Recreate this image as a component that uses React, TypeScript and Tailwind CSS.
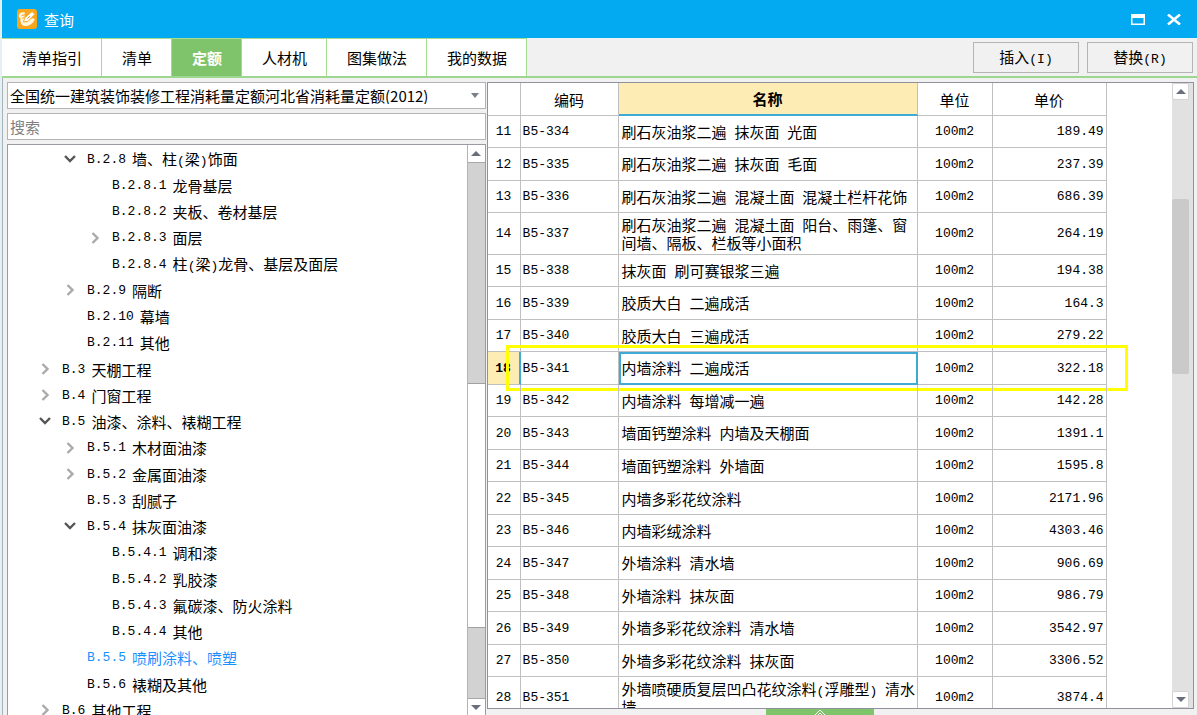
import React, { useState } from "react";
import clsx from "clsx";

const tabs = ["清单指引", "清单", "定额", "人材机", "图集做法", "我的数据"];

type TreeNode = {
	level: number;
	code: string;
	name: string;
	state?: "open" | "closed";
};

const tree: TreeNode[] = [
	{ level: 2, code: "B.2.8", name: "墙、柱(梁)饰面", state: "open" },
	{ level: 3, code: "B.2.8.1", name: "龙骨基层" },
	{ level: 3, code: "B.2.8.2", name: "夹板、卷材基层" },
	{ level: 3, code: "B.2.8.3", name: "面层", state: "closed" },
	{ level: 3, code: "B.2.8.4", name: "柱(梁)龙骨、基层及面层" },
	{ level: 2, code: "B.2.9", name: "隔断", state: "closed" },
	{ level: 2, code: "B.2.10", name: "幕墙" },
	{ level: 2, code: "B.2.11", name: "其他" },
	{ level: 1, code: "B.3", name: "天棚工程", state: "closed" },
	{ level: 1, code: "B.4", name: "门窗工程", state: "closed" },
	{ level: 1, code: "B.5", name: "油漆、涂料、裱糊工程", state: "open" },
	{ level: 2, code: "B.5.1", name: "木材面油漆", state: "closed" },
	{ level: 2, code: "B.5.2", name: "金属面油漆", state: "closed" },
	{ level: 2, code: "B.5.3", name: "刮腻子" },
	{ level: 2, code: "B.5.4", name: "抹灰面油漆", state: "open" },
	{ level: 3, code: "B.5.4.1", name: "调和漆" },
	{ level: 3, code: "B.5.4.2", name: "乳胶漆" },
	{ level: 3, code: "B.5.4.3", name: "氟碳漆、防火涂料" },
	{ level: 3, code: "B.5.4.4", name: "其他" },
	{ level: 2, code: "B.5.5", name: "喷刷涂料、喷塑" },
	{ level: 2, code: "B.5.6", name: "裱糊及其他" },
	{ level: 1, code: "B.6", name: "其他工程", state: "closed" },
];

const rows: [number, string, string, string][] = [
	[11, "B5-334", "刷石灰油浆二遍 抹灰面 光面", "189.49"],
	[12, "B5-335", "刷石灰油浆二遍 抹灰面 毛面", "237.39"],
	[13, "B5-336", "刷石灰油浆二遍 混凝土面 混凝土栏杆花饰", "686.39"],
	[14, "B5-337", "刷石灰油浆二遍 混凝土面 阳台、雨篷、窗间墙、隔板、栏板等小面积", "264.19"],
	[15, "B5-338", "抹灰面 刷可赛银浆三遍", "194.38"],
	[16, "B5-339", "胶质大白 二遍成活", "164.3"],
	[17, "B5-340", "胶质大白 三遍成活", "279.22"],
	[18, "B5-341", "内墙涂料 二遍成活", "322.18"],
	[19, "B5-342", "内墙涂料 每增减一遍", "142.28"],
	[20, "B5-343", "墙面钙塑涂料 内墙及天棚面", "1391.1"],
	[21, "B5-344", "墙面钙塑涂料 外墙面", "1595.8"],
	[22, "B5-345", "内墙多彩花纹涂料", "2171.96"],
	[23, "B5-346", "内墙彩绒涂料", "4303.46"],
	[24, "B5-347", "外墙涂料 清水墙", "906.69"],
	[25, "B5-348", "外墙涂料 抹灰面", "986.79"],
	[26, "B5-349", "外墙多彩花纹涂料 清水墙", "3542.97"],
	[27, "B5-350", "外墙多彩花纹涂料 抹灰面", "3306.52"],
	[28, "B5-351", "外墙喷硬质复层凹凸花纹涂料(浮雕型) 清水墙", "3874.4"],
];

const indent: Record<number, string> = {
	1: "pl-[30px]",
	2: "pl-[55px]",
	3: "pl-[80px]",
};

// latin characters are set in a half-width mono face next to the CJK text
const Mixed = ({ text }: { text: string }) => (
	<>
		{text.split(/([\x20-\x7e]+)/).map((part, i) =>
			i % 2 ? (
				<span key={i} className="font-['Liberation_Mono',monospace] text-[13px] leading-none">
					{part}
				</span>
			) : (
				part
			)
		)}
	</>
);

const Chevron = ({ open }: { open: boolean }) => (
	<svg
		viewBox="0 0 14 14"
		className={clsx("w-[14px] h-[14px]", open ? "text-[#555555]" : "text-[#aaaaaa]")}
		fill="none"
		stroke="currentColor"
		strokeWidth="2.4">
		<path d={open ? "M2 4l5 5 5-5" : "M4.5 2l5 5-5 5"} />
	</svg>
);

const Arrow = ({ down = false }: { down?: boolean }) => (
	<svg viewBox="0 0 10 5" className="w-[10px] h-[5px]" fill="#6b6f7c">
		<path d={down ? "M0 0h10L5 5z" : "M0 5h10L5 0z"} />
	</svg>
);

const Logo = () => (
	<svg viewBox="0 0 20 20" className="w-5 h-5">
		<rect width="20" height="20" rx="3" fill="#f9a61c" />
		<path
			d="M8 3.500C4.500 2.800 2 4 1.800 6.500c-.1 1.500.8 2.500 1.800 3-.6 1.500-.3 4.200 1.200 6 1.500 1.800 5 2 7.500.8 3-1.500 5-3.500 5.500-6.500l-3-.5-5 4-3-.3z"
			fill="#fff4dc"
		/>
		<path d="M6.500 13l1-4 7.500-6.500 2.800 2.800-7 7z" fill="#fff" stroke="#f9a61c" strokeWidth="0.9" />
		<path d="M4.500 6.800l3.500-1.300M5.200 9.300l2-1M10 10l3-3" stroke="#f9a61c" strokeWidth="1" />
	</svg>
);

const th = "border-r border-b border-[#c0c0c0] font-normal text-[15px]";
const td = "border-r border-b border-[#c0c0c0]";
const mono = "font-['Liberation_Mono',monospace] text-[13px]";

const App = () => {
	const [tab, setTab] = useState<string>("定额");
	const [node, setNode] = useState<string>("B.5.5");
	const [selected, setSelected] = useState<number>(18);

	return (
		<div className="h-screen flex flex-col overflow-hidden bg-[#f1f1f1] border-l-2 border-[#e6eff3] font-['Noto_Sans_CJK_SC',sans-serif] text-[15px] leading-[17px] text-black">
			<header className="h-[38px] shrink-0 bg-[#03a9f1] flex items-center pl-[15px] pr-4 text-white">
				<Logo />
				<h1 className="ml-[7px]">查询</h1>
				<button aria-label="最大化" className="ml-auto">
					<svg viewBox="0 0 14 11" className="w-[14px] h-[11px]" fill="#fff">
						<path fillRule="evenodd" d="M0 0h14v11H0zM1.500 4v5.500h11V4z" />
					</svg>
				</button>
				<button aria-label="关闭" className="ml-[22px]">
					<svg viewBox="0 0 14 11" className="w-[14px] h-[11px]" stroke="#fff" strokeWidth="2.600">
						<path d="M1 0.500l12 10M13 0.500l-12 10" />
					</svg>
				</button>
			</header>

			<div className="shrink-0 flex border-b-2 border-[#9dd68e]">
				<nav className="flex border-t border-[#a5dc92]">
					{tabs.map((name) => (
						<button
							key={name}
							onClick={() => setTab(name)}
							className={clsx(
								"h-[37px] pl-5 pr-[19px] border-r border-[#a5dc92]",
								tab === name ? "bg-[#7fc36a] text-white font-bold" : "bg-white"
							)}>
							{name}
						</button>
					))}
				</nav>
				<div className="ml-auto mr-1 flex items-center gap-2">
					<button className="w-[106px] h-[31px] border border-[#b4b4b4]">
						<Mixed text="插入(I)" />
					</button>
					<button className="w-[106px] h-[31px] border border-[#b4b4b4]">
						<Mixed text="替换(R)" />
					</button>
				</div>
			</div>

			<main className="flex-1 min-h-0 grid grid-cols-[479fr_708fr] grid-rows-[minmax(0,1fr)] gap-px border-l border-[#a3b5bb] pl-1 pr-[3px] pt-1">
				<section className="min-w-0 flex flex-col gap-1">
					<div className="relative shrink-0">
						<select
							aria-label="定额库"
							className="w-full h-[27px] pl-[2px] pr-6 appearance-none bg-white border border-[#b4b4b4] truncate">
							<option>全国统一建筑装饰装修工程消耗量定额河北省消耗量定额(2012)</option>
						</select>
						<span className="absolute right-[7px] top-[11px] pointer-events-none">
							<svg viewBox="0 0 8 5" className="w-2 h-[5px]" fill="#7b7f8c">
								<path d="M0 0h8L4 5z" />
							</svg>
						</span>
					</div>
					<input
						aria-label="搜索"
						placeholder="搜索"
						className="shrink-0 h-[27px] px-[2px] bg-white border border-[#b4b4b4] placeholder:text-[#808080]"
					/>
					<div className="flex-1 min-h-0 flex bg-white border border-b-0 border-[#9a9ca3]">
						<ul className="flex-1 overflow-hidden pt-px">
							{tree.map((item) => (
								<li key={item.code} className="h-[26px] nth-[4n]:h-[27px]">
									<button
										onClick={() => setNode(item.code)}
										className={clsx(
											"w-full h-full flex items-center whitespace-nowrap",
											indent[item.level],
											node === item.code && "text-[#1890ff]"
										)}>
										<span className="w-[14px] mr-[10px]">
											{item.state && <Chevron open={item.state === "open"} />}
										</span>
										<span className={clsx(mono, "mr-[6px]")}>{item.code}</span>
										<span>
											<Mixed text={item.name} />
										</span>
									</button>
								</li>
							))}
						</ul>
						<div className="w-[18px] flex flex-col bg-[#d2d2d2] border-l border-[#b4b4b4]">
							<button aria-label="向上" className="h-[18px] flex items-center justify-center bg-white border-b border-[#a8a8a8]">
								<Arrow />
							</button>
							<div className="grow-[221]" />
							<div className="grow-[244] bg-white border-y border-[#a0a0a0]" />
							<div className="grow-[70]" />
							<button aria-label="向下" className="h-[17px] flex items-center justify-center bg-white border-t border-[#a8a8a8]">
								<Arrow down />
							</button>
						</div>
					</div>
				</section>

				<section className="min-w-0 flex flex-col">
					<div className="flex-1 min-h-0 flex bg-white border border-[#8f929c]">
						<div className="flex-1 overflow-hidden">
							<table className="table-fixed w-[619px] border-separate border-spacing-0">
								<colgroup>
									<col className="w-[33px]" />
									<col className="w-[98px]" />
									<col className="w-[299px]" />
									<col className="w-[75px]" />
									<col className="w-[114px]" />
								</colgroup>
								<thead>
									<tr className="h-[33px]">
										<th className={th} />
										<th className={th}>编码</th>
										<th className="border-r border-b-2 border-r-[#c0c0c0] border-b-[#3faad4] bg-[#feecb5] font-bold">
											名称
										</th>
										<th className={th}>单位</th>
										<th className={th}>单价</th>
									</tr>
								</thead>
								<tbody>
									{rows.map(([no, code, name, price]) => {
										const active = no === selected;
										return (
											<tr
												key={no}
												onClick={() => setSelected(no)}
												className={clsx("relative", name.length > 21 ? "h-[42px]" : "h-[32px] even:h-[33px]")}>
												<td
													className={clsx(
														mono,
														"border-b border-b-[#c0c0c0] text-center",
														active
															? "border-r-2 border-r-[#3faad4] bg-[#feecb5] font-bold"
															: "border-r border-r-[#c0c0c0]"
													)}>
													{no}
												</td>
												<td className={clsx(td, mono, "pl-[2px]")}>{code}</td>
												<td className={clsx(td, "pl-[3px]", active && "outline-2 -outline-offset-2 outline-[#3faad4]")}>
													<Mixed text={name} />
												</td>
												<td className={clsx(td, mono, "text-center")}>100m2</td>
												<td className={clsx(td, mono, "pr-[2px] text-right")}>
													{price}
													{active && (
														<span className="absolute left-[18px] -right-[21px] -top-[7px] -bottom-[6px] border-3 border-[#ffff00] pointer-events-none" />
													)}
												</td>
											</tr>
										);
									})}
								</tbody>
							</table>
						</div>
						<div className="w-[21px] pr-1 flex flex-col bg-[#e1e1e1]">
							<button aria-label="表格向上" className="h-[17px] flex items-center justify-center bg-white border border-[#d4d4d4] rounded-xs">
								<Arrow />
							</button>
							<div className="grow-[99]" />
							<div className="grow-[175] bg-[#cacaca] rounded-xs" />
							<div className="grow-[316]" />
							<button aria-label="表格向下" className="h-[17px] flex items-center justify-center bg-white border border-[#d4d4d4] rounded-xs">
								<Arrow down />
							</button>
						</div>
					</div>
					<button aria-label="展开" className="shrink-0 self-center w-[108px] h-[6px] -ml-10 bg-[#7fc36a] flex justify-center overflow-hidden">
						<svg viewBox="0 0 12 6" className="w-3 h-[6px]" fill="none" stroke="#fff">
							<path d="M1 6l5-5 5 5M4 6l2-2 2 2" />
						</svg>
					</button>
				</section>
			</main>
		</div>
	);
};

export default App;
